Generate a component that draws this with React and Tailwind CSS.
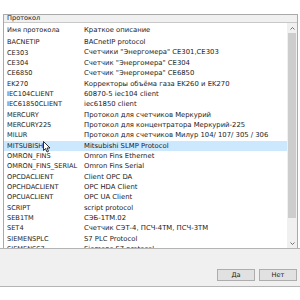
import React from 'react';

const rows = [
  ['BACNETIP', 'BACnetIP protocol'],
  ['CE303', 'Счетчики "Энергомера" CE301,CE303'],
  ['CE304', 'Счетчик "Энергомера" CE304'],
  ['CE6850', 'Счетчик "Энергомера" CE6850'],
  ['EK270', 'Корректоры объёма газа EK260 и EK270'],
  ['IEC104CLIENT', '60870-5 iec104 client'],
  ['IEC61850CLIENT', 'iec61850 client'],
  ['MERCURY', 'Протокол для счетчиков Меркурий'],
  ['MERCURY225', 'Протокол для концентратора Меркурий-225'],
  ['MILUR', 'Протокол для счетчиков Милур 104/ 107/ 305 / 306'],
  ['MITSUBISHI', 'Mitsubishi SLMP Protocol'],
  ['OMRON_FINS', 'Omron Fins Ethernet'],
  ['OMRON_FINS_SERIAL', 'Omron Fins Serial'],
  ['OPCDACLIENT', 'Client OPC DA'],
  ['OPCHDACLIENT', 'OPC HDA Client'],
  ['OPCUACLIENT', 'OPC UA Client'],
  ['SCRIPT', 'script protocol'],
  ['SEB1TM', 'СЭБ-1ТМ.02'],
  ['SET4', 'Счетчик СЭТ-4, ПСЧ-4ТМ, ПСЧ-3ТМ'],
  ['SIEMENSPLC', 'S7 PLC Protocol'],
  ['SIEMENSS7', 'Siemens S7 protocol'],
];

const Cursor = () => (
  <svg className="absolute left-[43px] top-[141px]" width="8" height="12" viewBox="0 0 8 12">
    <path d="M0.5 0.5 L0.5 9.5 L2.5 7.5 L4 11 L5.5 10.3 L4 7 L7 7 Z" fill="#fff" stroke="#000" strokeWidth="0.8" />
  </svg>
);

export default function App() {
  return (
    <div className="relative w-[300px] h-[300px] bg-white font-['DejaVu_Sans',sans-serif] text-[6.6px] text-[#222] overflow-hidden">
      <div className="h-[14px]" />
      <div className="ml-[3px] mr-[2px] h-[234px] border border-[#a9a9a9] border-b-0 flex flex-col">
        <div className="h-[8px] bg-[#f0f0f0] border-b border-[#c8c8c8] flex items-center pl-[3px] leading-none">
          Протокол
        </div>
        <div className="flex flex-1 min-h-0">
          <div className="flex-1 min-w-0 overflow-hidden">
            <div className="h-[14.4px] flex items-center leading-none">
              <span className="w-[80px] pl-[3px]">Имя протокола</span>
              <span className="text-[6.85px]">Краткое описание</span>
            </div>
            {rows.map(([name, desc]) => (
              <div
                key={name}
                className={`h-[10.35px] flex items-center leading-none whitespace-nowrap ${name === 'MITSUBISHI' ? 'bg-[#cce8ff]' : ''}`}
              >
                <span className="w-[80px] pl-[3px]">{name}</span>
                <span className="text-[6.85px]">{desc}</span>
              </div>
            ))}
          </div>
          <div className="w-[10px] bg-[#f0f0f0] flex flex-col">
            <div className="h-[10px] flex items-center justify-center">
              <svg width="5" height="3" viewBox="0 0 5 3">
                <path d="M0.5 2.5 L2.5 0.5 L4.5 2.5" fill="none" stroke="#606060" strokeWidth="0.9" />
              </svg>
            </div>
            <div className="h-[185px] mx-[1px] bg-[#cdcdcd]" />
            <div className="flex-1" />
            <div className="h-[10px] flex items-center justify-center">
              <svg width="5" height="3" viewBox="0 0 5 3">
                <path d="M0.5 0.5 L2.5 2.5 L4.5 0.5" fill="none" stroke="#606060" strokeWidth="0.9" />
              </svg>
            </div>
          </div>
        </div>
      </div>
      <div className="h-[39px] bg-[#f0f0f0] border-t border-b border-[#b4b4b4] flex items-end justify-end gap-[4px] pr-[3px] pb-[5px]">
        <button className="w-[38px] h-[12px] bg-[#e1e1e1] border border-[#adadad] flex items-center justify-center leading-none text-[6.6px]">
          Да
        </button>
        <button className="w-[38px] h-[12px] bg-[#e1e1e1] border border-[#adadad] flex items-center justify-center leading-none text-[6.6px]">
          Нет
        </button>
      </div>
      <Cursor />
    </div>
  );
}
